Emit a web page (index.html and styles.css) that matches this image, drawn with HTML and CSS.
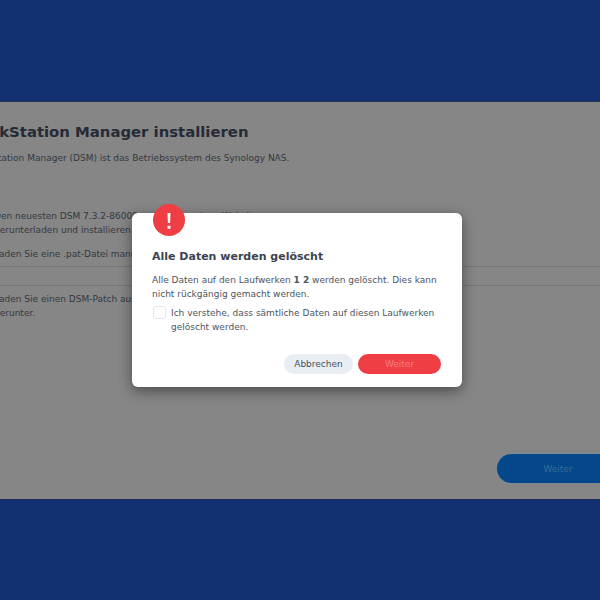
FILE: index.html
```html
<!DOCTYPE html>
<html lang="de">
    <head>
        <meta charset="utf-8">
        <meta name="viewport" content="width=device-width, initial-scale=1.0">
        <title>DiskStation Manager installieren</title>
        <link rel="stylesheet" href="styles.css">
    </head>
    <body>
        <div class="panel"> <!-- grey sheet behind the dialog -->
            <div class="content">
                <h1>DiskStation Manager installieren</h1>
                <p class="intro">DiskStation Manager (DSM) ist das Betriebssystem des Synology NAS.</p>
                <div class="option first">
                    <p>Den neuesten DSM 7.3.2-86009 von der Synology-Website<br>herunterladen und installieren</p>
                </div>
                <div class="option second">
                    <p>Laden Sie eine .pat-Datei manuell hoch</p>
                </div>
                <div class="option third">
                    <p>Laden Sie einen DSM-Patch aus dem Download Center<br>herunter.</p>
                </div>
            </div>
            <div class="footer">
                <button type="button" class="next">Weiter</button>
            </div>
        </div>
        <div class="dialog"> <!-- warning dialog, sits over the panel -->
            <div class="badge">
                <svg width="32" height="32" viewBox="0 0 32 32">
                    <path d="M14.5 9h3l-.4 10h-2.2z" fill="#fff"/>
                    <rect x="14.5" y="21.8" width="3" height="3" rx=".6" fill="#fff"/>
                </svg>
            </div>
            <h2>Alle Daten werden gelöscht</h2>
            <p class="msg">Alle Daten auf den Laufwerken <b>1 2</b> werden gelöscht. Dies kann nicht rückgängig gemacht werden.</p>
            <label class="check">
                <span class="box"></span>
                <span>Ich verstehe, dass sämtliche Daten auf diesen Laufwerken gelöscht werden.</span>
            </label>
            <div class="actions">
                <button type="button" class="cancel">Abbrechen</button>
                <button type="button" class="confirm">Weiter</button>
            </div>
        </div>
    </body>
</html>
```

FILE: styles.css
```css
*{
    margin: 0;
    padding: 0;
    box-sizing: border-box;
}
html, body{
    height: 100%;
}
body{
    background-color: #133070;
    font-family: "DejaVu Sans", sans-serif;
    overflow: hidden;
    padding-top: 101px;
}
.panel{
    height: 399px;
    width: 100%;
    background-color: #868686;
    border-top: 1px solid #24365c;
    border-bottom: 1px solid #1c2f5c;
    display: flex;
    flex-direction: column;
    justify-content: space-between;
    overflow: hidden;
}
.content{
    margin-left: -27px; /* the left part of the sheet is cut off in this view */
    padding-top: 20px;
}
h1{
    font-size: 14.85px;
    line-height: 20px;
    color: #252b36;
    white-space: nowrap;
}
.intro{
    margin-top: 9px;
    font-size: 9px;
    line-height: 14px;
    color: #33383f;
    white-space: nowrap;
}
.option{
    margin-left: 21px; /* radio column, off screen here */
}
.option p{
    font-size: 9px;
    line-height: 14px;
    color: #33383f;
    white-space: nowrap;
}
.first{
    margin-top: 44px;
    padding-bottom: 10px;
}
.second{
    padding-bottom: 5px;
    border-bottom: 1px solid #777;
}
.third{
    margin-top: 18px;
    padding-top: 6px;
    border-top: 1px solid #777;
}
.footer{
    display: flex;
    justify-content: flex-end;
    padding-bottom: 16px;
}
.next{
    width: 122px;
    height: 29px;
    margin-right: -19px;
    border: none;
    border-radius: 15px;
    background-color: #04478a;
    color: #3c6b99;
    font: 9px "DejaVu Sans", sans-serif;
    box-shadow: 0 0 0 1px #7a8a96;
}
.dialog{
    position: absolute;
    left: 132px;
    top: 213px;
    width: 330px;
    height: 174px;
    padding: 36px 20px 0;
    background-color: #fff;
    border-radius: 6px;
    box-shadow: 0 4px 14px rgba(0, 0, 0, .45);
}
.badge{
    position: absolute;
    left: 21px;
    top: -9px;
    width: 32px;
    height: 32px;
    border-radius: 50%;
    background-color: #ee3e44;
}
h2{
    font-size: 11px;
    line-height: 16px;
    font-weight: bold;
    color: #3b4450;
}
.msg{
    margin-top: 8px;
    font-size: 9px;
    line-height: 14px;
    color: #4c5562;
}
.check{
    display: flex;
    gap: 5px;
    margin-top: 5px;
    font-size: 9px;
    line-height: 14px;
    color: #4c5562;
}
.box{
    flex: none;
    width: 13px;
    height: 13px;
    margin-left: 1px;
    border: 1px solid #e3e7ec;
    border-radius: 3px;
}
.actions{
    position: absolute;
    right: 21px;
    bottom: 13px;
    display: flex;
    gap: 5px;
}
.actions button{
    height: 20px;
    border: none;
    border-radius: 10px;
    font: 9px "DejaVu Sans", sans-serif;
}
.cancel{
    width: 69px;
    background-color: #e9eef4;
    color: #47505c;
}
.confirm{
    width: 83px;
    background-color: #ee3e44;
    color: #f77f84;
}
```
